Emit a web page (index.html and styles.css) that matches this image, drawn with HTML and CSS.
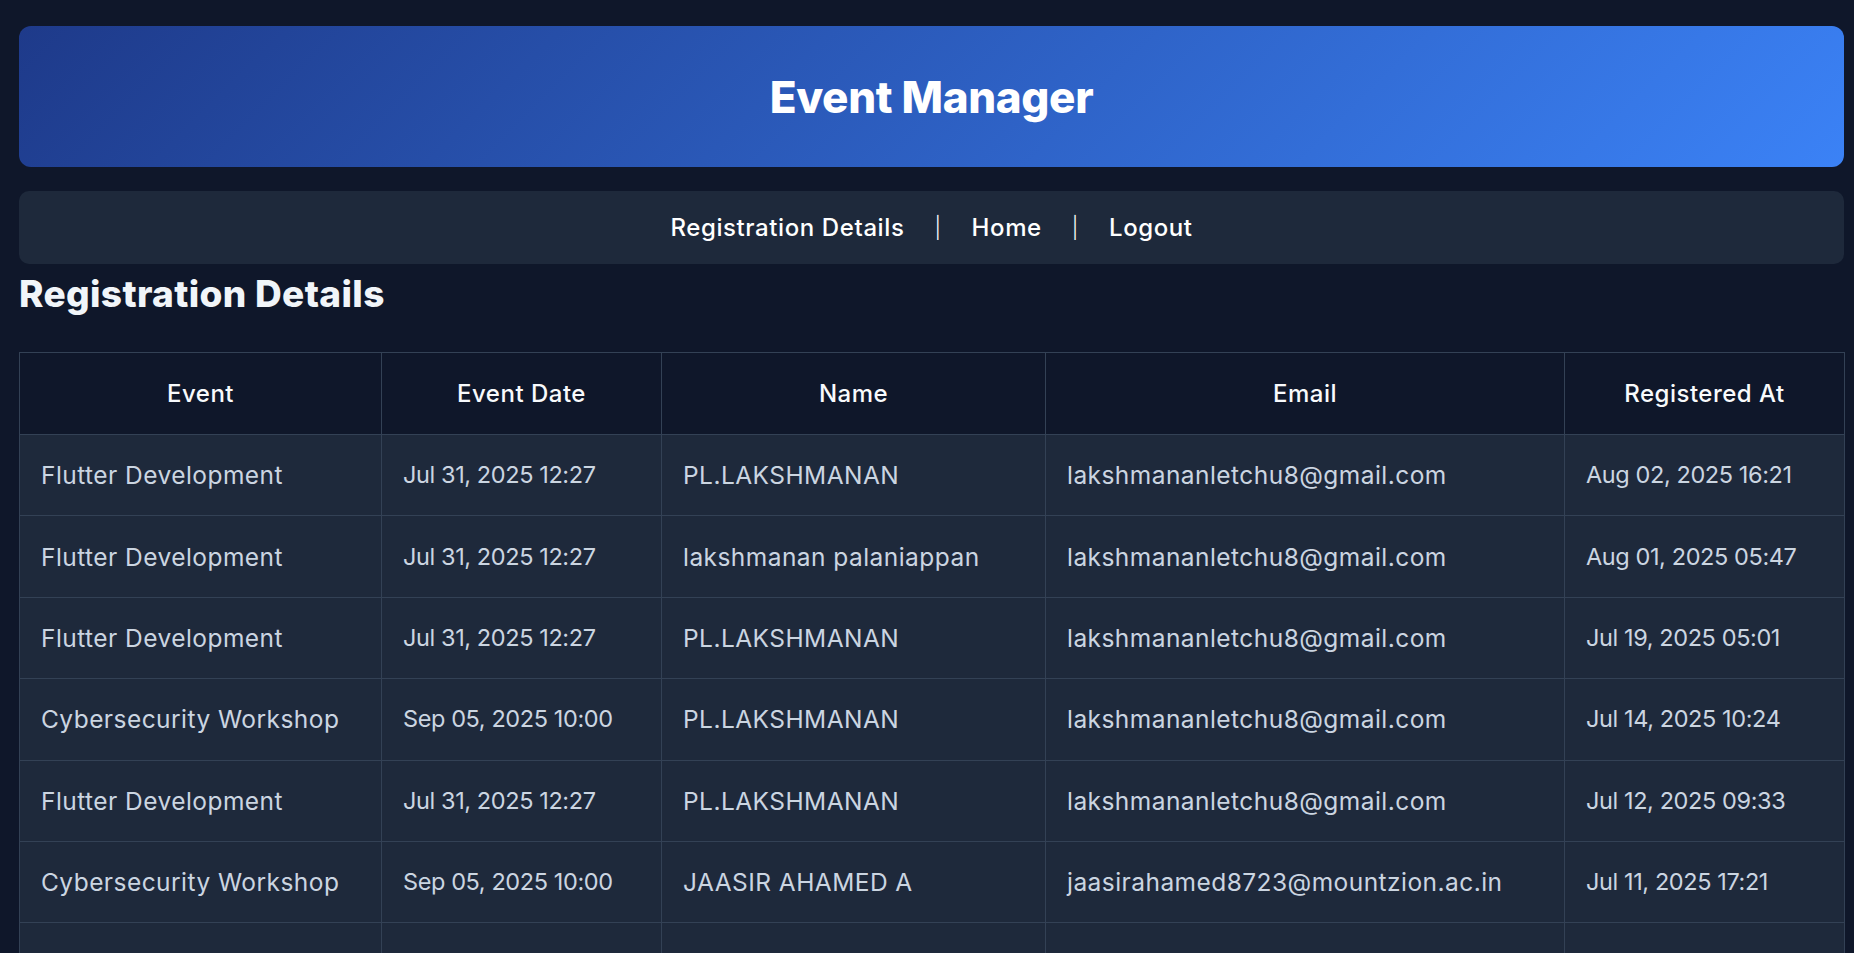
FILE: index.html
```html
<!DOCTYPE html>
<html lang="en">
<head>
<meta charset="utf-8">
<title>Event Manager</title>
<link rel="stylesheet" href="styles.css">
</head>
<body>
<div class="page">
  <header class="banner">
    <h1 class="banner-title">Event Manager</h1>
  </header>
  <nav class="nav">
    <a class="nav-link" href="#">Registration Details</a>
    <span class="nav-sep">|</span>
    <a class="nav-link" href="#">Home</a>
    <span class="nav-sep">|</span>
    <a class="nav-link" href="#">Logout</a>
  </nav>
  <h2 class="section-title">Registration Details</h2>
  <table class="reg-table">
    <colgroup>
      <col class="c-event">
      <col class="c-date">
      <col class="c-name">
      <col class="c-email">
      <col class="c-reg">
    </colgroup>
    <thead>
      <tr><th>Event</th><th>Event Date</th><th>Name</th><th>Email</th><th>Registered At</th></tr>
    </thead>
    <tbody>
      <tr><td>Flutter Development</td><td class="num">Jul 31, 2025 12:27</td><td>PL.LAKSHMANAN</td><td>lakshmananletchu8@gmail.com</td><td class="num">Aug 02, 2025 16:21</td></tr>
      <tr><td>Flutter Development</td><td class="num">Jul 31, 2025 12:27</td><td>lakshmanan palaniappan</td><td>lakshmananletchu8@gmail.com</td><td class="num">Aug 01, 2025 05:47</td></tr>
      <tr><td>Flutter Development</td><td class="num">Jul 31, 2025 12:27</td><td>PL.LAKSHMANAN</td><td>lakshmananletchu8@gmail.com</td><td class="num">Jul 19, 2025 05:01</td></tr>
      <tr><td>Cybersecurity Workshop</td><td class="num">Sep 05, 2025 10:00</td><td>PL.LAKSHMANAN</td><td>lakshmananletchu8@gmail.com</td><td class="num">Jul 14, 2025 10:24</td></tr>
      <tr><td>Flutter Development</td><td class="num">Jul 31, 2025 12:27</td><td>PL.LAKSHMANAN</td><td>lakshmananletchu8@gmail.com</td><td class="num">Jul 12, 2025 09:33</td></tr>
      <tr><td>Cybersecurity Workshop</td><td class="num">Sep 05, 2025 10:00</td><td>JAASIR AHAMED A</td><td>jaasirahamed8723@mountzion.ac.in</td><td class="num">Jul 11, 2025 17:21</td></tr>
      <tr><td>Flutter Development</td><td class="num">Jul 31, 2025 12:27</td><td>JAASIR AHAMED A</td><td>jaasirahamed8723@mountzion.ac.in</td><td class="num">Jul 10, 2025 11:05</td></tr>
      <tr><td>Cybersecurity Workshop</td><td class="num">Sep 05, 2025 10:00</td><td>PL.LAKSHMANAN</td><td>lakshmananletchu8@gmail.com</td><td class="num">Jul 09, 2025 08:42</td></tr>
    </tbody>
  </table>
</div>
</body>
</html>
```

FILE: styles.css
```css
* { box-sizing: border-box; }

html, body {
  margin: 0;
  background: #0f172a;
}

body {
  font-family: Inter, "Noto Sans", "DejaVu Sans", sans-serif;
  color: #f1f5f9;
}

.page {
  padding: 26px 10px 0 19px;
}

.banner {
  height: 141px;
  border-radius: 12px;
  background: linear-gradient(135deg, #1e3a8a 0%, #3b82f6 100%);
  display: flex;
  align-items: center;
  justify-content: center;
}

.banner-title {
  margin: 0;
  font-size: 44px;
  font-weight: 800;
  line-height: 1;
  color: #ffffff;
  letter-spacing: -0.35px;
}

.nav {
  margin-top: 24px;
  height: 73px;
  border-radius: 10px;
  background: #1e293b;
  display: flex;
  align-items: center;
  justify-content: center;
  gap: 30px;
  font-size: 24px;
  font-weight: 500;
  letter-spacing: 0.6px;
}

.nav-link {
  color: #ffffff;
  text-decoration: none;
}

.nav-sep {
  color: #ffffff;
  font-weight: 300;
  font-size: 21px;
}

.section-title {
  margin: 10px 0 0 0;
  font-size: 37px;
  line-height: 40px;
  font-weight: 800;
  color: #f1f5f9;
  letter-spacing: 0.35px;
}

.reg-table {
  margin-top: 38px;
  width: 100%;
  border-collapse: collapse;
  table-layout: fixed;
  border: 1px solid #334155;
}

.c-event { width: 362px; }
.c-date { width: 280px; }
.c-name { width: 384px; }
.c-email { width: 519px; }
.c-reg { width: 280px; }

.reg-table th,
.reg-table td {
  border: 1px solid #334155;
  line-height: 30px;
  white-space: nowrap;
  overflow: hidden;
}

.reg-table th {
  background: #0f172a;
  color: #f8fafc;
  font-size: 24px;
  font-weight: 500;
  text-align: center;
  padding: 25.5px 21px;
  letter-spacing: 0.5px;
}

.reg-table td {
  background: #1e293b;
  color: #cbd5e1;
  font-size: 24.5px;
  font-weight: 400;
  text-align: left;
  padding: 25.2px 21px;
  letter-spacing: 0.45px;
}

.reg-table td.num {
  font-size: 23.5px;
  letter-spacing: -0.4px;
}
```
